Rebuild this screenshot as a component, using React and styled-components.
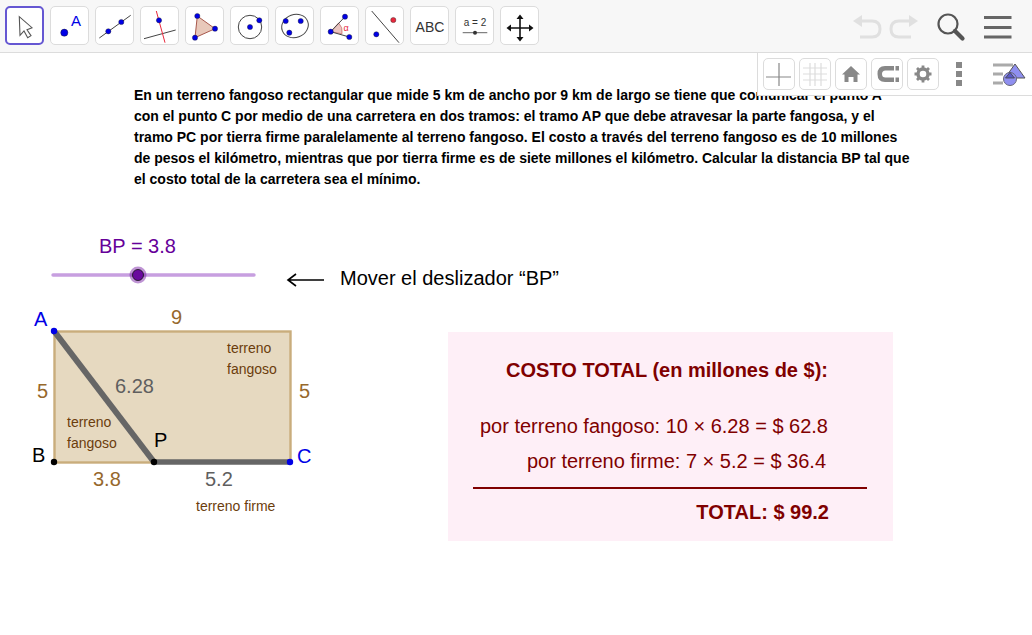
import styled, { createGlobalStyle } from 'styled-components';

const GlobalStyle = createGlobalStyle`
  html, body {
    margin: 0;
    padding: 0;
    background: #fff;
    font-family: "Liberation Sans", Arial, sans-serif;
    overflow: hidden;
  }
`;

const Page = styled.div`
  position: relative;
  width: 1032px;
  height: 635px;
  overflow: hidden;
`;

const Toolbar = styled.header`
  display: flex;
  align-items: flex-start;
  justify-content: space-between;
  height: 46px;
  padding: 6px 0 0 5px;
  background: #f7f7f7;
  border-bottom: 1px solid #dcdcdc;
`;

const ToolGroup = styled.div`
  display: flex;
  gap: 6px;
`;

const ToolButton = styled.button`
  width: 39px;
  height: 39px;
  padding: 0;
  border-radius: 5px;
  background: #fff;
  border: ${(props) => (props.$active ? '2px solid #6557d2' : '1px solid #dcdcdc')};
  box-sizing: border-box;
  display: flex;
  svg {
    display: block;
    margin: ${(props) => (props.$active ? '-1px' : '0')};
    flex: none;
  }
`;

const ActionIcon = styled.svg`
  display: block;
`;

const StyleBar = styled.div`
  position: absolute;
  top: 53px;
  right: 0;
  width: 275px;
  height: 43px;
  padding: 5px 0 0 5px;
  box-sizing: border-box;
  display: flex;
  gap: 4px;
  background: #fff;
  border-left: 1px solid #dcdcdc;
  border-bottom: 1px solid #dcdcdc;
  z-index: 2;
`;

const StyleButton = styled.button`
  width: 32px;
  height: 32px;
  padding: 0;
  border: 1px solid #dcdcdc;
  border-radius: 5px;
  background: #fff;
  display: flex;
  svg {
    flex: none;
    margin: -1px;
  }
`;

const StyleIcon = styled.svg`
  flex: none;
`;

const Problem = styled.p`
  margin: 0;
  padding: 32px 0 0 134px;
  font-size: 14px;
  line-height: 21px;
  font-weight: 700;
  color: #000;
  white-space: nowrap;
`;

const SliderRow = styled.div`
  display: flex;
  align-items: flex-start;
  margin-top: 40px;
`;

const ArrowNote = styled.span`
  margin: 36px 0 0 16px;
  font-size: 20px;
  line-height: 24px;
  color: #000;
  white-space: nowrap;
`;

const FigureRow = styled.div`
  display: flex;
  align-items: flex-start;
  margin-top: 8px;
`;

const CostCard = styled.section`
  width: 445px;
  height: 209px;
  margin: 32px 0 0 108px;
  padding-top: 26px;
  box-sizing: border-box;
  background: #feeff7;
  color: #800000;
`;

const CostLine = styled.div`
  margin-top: ${(props) => props.$top || 0}px;
  padding-right: ${(props) => props.$right || 65}px;
  font-size: 20px;
  line-height: 24px;
  font-weight: ${(props) => (props.$bold ? 700 : 400)};
  text-align: right;
  white-space: nowrap;
`;

const CostRule = styled.hr`
  height: 2px;
  margin: 14px 26px 0 25px;
  border: 0;
  background: #800000;
`;

const Svg = styled.svg`
  display: block;
  flex: none;
  text {
    font-family: "Liberation Sans", Arial, sans-serif;
  }
`;

const BLUE = '#0000e6';
const BROWN = '#96682c';

function Icon({ children }) {
  return (
    <Svg width="39" height="39" viewBox="0 0 39 39">
      {children}
    </Svg>
  );
}

const Dot = ({ x, y, r = 2.6, fill = BLUE }) => (
  <circle cx={x} cy={y} r={r} fill={fill} stroke="#222" strokeWidth="0.4" />
);

const tools = [
  <Icon key="move">
    <path
      d="M13.3 9.7 14 28.3 18 24 21.7 30.7 25 28.7 21 22.7 26 20.7Z"
      fill="#fff"
      stroke="#555"
      strokeWidth="1.1"
    />
  </Icon>,
  <Icon key="point">
    <circle cx="13.3" cy="25.7" r="3.6" fill={BLUE} stroke="#111" strokeWidth="0.4" />
    <text x="20" y="19" fontSize="15" fill={BLUE}>A</text>
  </Icon>,
  <Icon key="line">
    <line x1="3.3" y1="31" x2="34.7" y2="8.3" stroke="#444" />
    <Dot x={12.3} y={24.3} />
    <Dot x={25.3} y={15} />
  </Icon>,
  <Icon key="perp">
    <line x1="3" y1="31.7" x2="34.7" y2="23" stroke="#444" />
    <line x1="15.3" y1="4" x2="24" y2="35.7" stroke="#e8283c" />
    <Dot x={18} y={13.3} />
  </Icon>,
  <Icon key="polygon">
    <polygon points="11.3,9 29,21.7 9,30.7" fill="#e8c8ba" stroke="#a8584c" />
    <Dot x={11.3} y={9} />
    <Dot x={29} y={21.7} />
    <Dot x={9} y={30.7} />
  </Icon>,
  <Icon key="circle">
    <circle cx="19" cy="20" r="11.7" fill="none" stroke="#444" />
    <Dot x={19} y={20} />
    <Dot x={28.3} y={13.3} />
  </Icon>,
  <Icon key="conic">
    <ellipse cx="19" cy="19" rx="13.5" ry="11.5" fill="none" stroke="#444" transform="rotate(-20 19 19)" />
    <Dot x={9.7} y={14} />
    <Dot x={13.3} y={25.7} />
    <Dot x={24.7} y={14} />
  </Icon>,
  <Icon key="angle">
    <path d="M9.7 24.7 17.6 15.9A12 12 0 0 1 21 26.8Z" fill="#eac4c0" stroke="#c05050" strokeWidth="0.6" />
    <path d="M24 9.7 9.7 24.7 28.3 30" fill="none" stroke="#444" />
    <Dot x={24} y={9.7} />
    <Dot x={9.7} y={24.7} />
    <Dot x={28.3} y={30} />
    <text x="22.5" y="23.5" fontSize="9" fill="#e8283c">α</text>
  </Icon>,
  <Icon key="reflect">
    <line x1="5.7" y1="4" x2="33" y2="35.7" stroke="#444" />
    <Dot x={27.3} y={13} fill="#e8283c" />
    <Dot x={10.3} y={27.3} />
  </Icon>,
  <Icon key="text">
    <text x="19" y="24.5" fontSize="14" fill="#333" textAnchor="middle">ABC</text>
  </Icon>,
  <Icon key="slider">
    <text x="19" y="19" fontSize="10" fill="#333" textAnchor="middle">a = 2</text>
    <line x1="6.7" y1="25.7" x2="31.3" y2="25.7" stroke="#666" />
    <circle cx="19" cy="25.7" r="2" fill="#333" />
  </Icon>,
  <Icon key="pan">
    <path d="M19 11V31M9 21H29" stroke="#111" strokeWidth="1.6" />
    <path d="M19 7.5 15.5 12H22.5ZM19 34.5 15.5 30H22.5ZM5.5 21 10 17.5V24.5ZM32.5 21 28 17.5V24.5Z" fill="#111" />
  </Icon>,
];

function StyleGlyph({ children }) {
  return (
    <Svg width="32" height="32" viewBox="0 0 32 32">
      {children}
    </Svg>
  );
}

function App() {
  return (
    <Page>
      <GlobalStyle />
      <Toolbar>
        <ToolGroup>
          {tools.map((icon, index) => (
            <ToolButton key={index} $active={index === 0}>
              {icon}
            </ToolButton>
          ))}
        </ToolGroup>
        <ActionIcon width="180" height="46" viewBox="852 6 180 46">
          <path d="M858 21H872Q880 21 880 29T872 37H860" fill="none" stroke="#e0e0e0" strokeWidth="3" />
          <path d="M853 21 862 15V27Z" fill="#e0e0e0" />
          <path d="M912 21H899Q891 21 891 29T899 37H911" fill="none" stroke="#e0e0e0" strokeWidth="3" />
          <path d="M918 21 909 15V27Z" fill="#e0e0e0" />
          <circle cx="948" cy="24" r="9.5" fill="none" stroke="#555" strokeWidth="2.2" />
          <line x1="955" y1="31" x2="962.5" y2="38.5" stroke="#555" strokeWidth="4.2" strokeLinecap="round" />
          <path d="M984 17.5H1011.5M984 27.5H1011.5M984 37H1011.5" stroke="#666" strokeWidth="3" />
        </ActionIcon>
      </Toolbar>

      <StyleBar>
        <StyleButton>
          <StyleGlyph>
            <path d="M16 5V28M3 19H28" stroke="#888" strokeWidth="1.2" />
          </StyleGlyph>
        </StyleButton>
        <StyleButton>
          <StyleGlyph>
            <path d="M11 5V28M16 5V28M22 5V28M4 10H28M4 16H28M4 22H28" stroke="#ddd" strokeWidth="1.2" />
          </StyleGlyph>
        </StyleButton>
        <StyleButton>
          <StyleGlyph>
            <path d="M16 8 25 16.5H22.5V24H18.5V19H13.5V24H9.5V16.5H7Z" fill="#888" />
          </StyleGlyph>
        </StyleButton>
        <StyleButton>
          <StyleGlyph>
            <path
              d="M23 8H14Q6.5 8 6.5 16T14 24H23V19.5H14.5Q11 19.5 11 16T14.5 12.5H23Z"
              fill="#888"
            />
            <rect x="24.5" y="8" width="3.5" height="4.5" fill="#888" />
            <rect x="24.5" y="19.5" width="3.5" height="4.5" fill="#888" />
          </StyleGlyph>
        </StyleButton>
        <StyleButton>
          <StyleGlyph>
            <circle cx="16" cy="16" r="5" fill="none" stroke="#888" strokeWidth="3.4" />
            <path
              d="M16 7.5V10.5M16 21.5V24.5M7.5 16H10.5M21.5 16H24.5M10 10 12 12M20 20 22 22M22 10 20 12M12 20 10 22"
              stroke="#888"
              strokeWidth="2.8"
            />
          </StyleGlyph>
        </StyleButton>
        <StyleIcon width="90" height="32" viewBox="0 0 90 32">
          <path d="M13 4H19V10H13ZM13 13H19V19H13ZM13 22H19V28H13Z" fill="#888" />
          <path d="M50 7H70M50 16H60M50 25H60" stroke="#aaa" strokeWidth="3" />
          <path d="M72 6 82 20H62Z" fill="#8f8ff0" stroke="#555" />
          <circle cx="67" cy="21" r="6.5" fill="#8f8ff0" stroke="#667" />
          <path d="M67 14.5 71.5 20H62.5Z" fill="#5a5ac8" stroke="#444" strokeWidth="0.8" />
        </StyleIcon>
      </StyleBar>

      <Problem>
        En un terreno fangoso rectangular que mide 5 km de ancho por 9 km de largo se tiene que comunicar el punto A
        <br />
        con el punto C por medio de una carretera en dos tramos: el tramo AP que debe atravesar la parte fangosa, y el
        <br />
        tramo PC por tierra firme paralelamente al terreno fangoso. El costo a través del terreno fangoso es de 10 millones
        <br />
        de pesos el kilómetro, mientras que por tierra firme es de siete millones el kilómetro. Calcular la distancia BP tal que
        <br />
        el costo total de la carretera sea el mínimo.
      </Problem>

      <SliderRow>
        <Svg width="280" height="62" viewBox="0 230 280 62">
          <text x="99" y="253" fontSize="20" fill="#660099">BP = 3.8</text>
          <line x1="53" y1="275" x2="254" y2="275" stroke="#c79fe0" strokeWidth="3.4" strokeLinecap="round" />
          <circle cx="138" cy="275" r="8.5" fill="#660099" fillOpacity="0.42" />
          <circle cx="138" cy="275" r="5.5" fill="#6a0a9e" stroke="#111" strokeWidth="0.8" />
        </Svg>
        <Svg width="44" height="62" viewBox="280 230 44 62">
          <path d="M288 280H324M296 274 288 280 296 286" fill="none" stroke="#000" strokeWidth="1.6" />
        </Svg>
        <ArrowNote>Mover el deslizador “BP”</ArrowNote>
      </SliderRow>

      <FigureRow>
        <Svg width="340" height="225" viewBox="0 300 340 225">
          <rect x="54.5" y="331.5" width="236" height="131" fill="#e6d9c0" stroke="#c9ad7c" strokeWidth="2.4" />
          <line x1="54" y1="331" x2="154" y2="462" stroke="#666" strokeWidth="6" />
          <line x1="154" y1="462" x2="290" y2="462" stroke="#666" strokeWidth="5.4" />
          <circle cx="54" cy="331" r="3.2" fill={BLUE} />
          <circle cx="54" cy="462" r="3.2" fill="#000" />
          <circle cx="154" cy="462" r="3.2" fill="#000" />
          <circle cx="290" cy="462" r="3.2" fill={BLUE} />
          <g fontSize="20">
            <text x="34" y="326" fill={BLUE}>A</text>
            <text x="32" y="462" fill="#000">B</text>
            <text x="154" y="447" fill="#000">P</text>
            <text x="297" y="463" fill={BLUE}>C</text>
            <text x="171" y="324" fill={BROWN}>9</text>
            <text x="37" y="398" fill={BROWN}>5</text>
            <text x="299" y="398" fill={BROWN}>5</text>
            <text x="115" y="393" fill="#5f5f5f">6.28</text>
            <text x="93" y="486" fill={BROWN}>3.8</text>
            <text x="205" y="486" fill="#5f5f5f">5.2</text>
          </g>
          <g fontSize="14" fill="#6b3d0c">
            <text x="227" y="353">terreno</text>
            <text x="227" y="374">fangoso</text>
            <text x="67" y="427">terreno</text>
            <text x="67" y="448">fangoso</text>
            <text x="196" y="511">terreno firme</text>
          </g>
        </Svg>
        <CostCard>
          <CostLine $bold>COSTO TOTAL (en millones de $):</CostLine>
          <CostLine $top={32}>por terreno fangoso: 10 × 6.28 = $ 62.8</CostLine>
          <CostLine $top={11} $right={67}>por terreno firme: 7 × 5.2 = $ 36.4</CostLine>
          <CostRule />
          <CostLine $bold $top={11} $right={64}>TOTAL: $ 99.2</CostLine>
        </CostCard>
      </FigureRow>
    </Page>
  );
}

export default App;
